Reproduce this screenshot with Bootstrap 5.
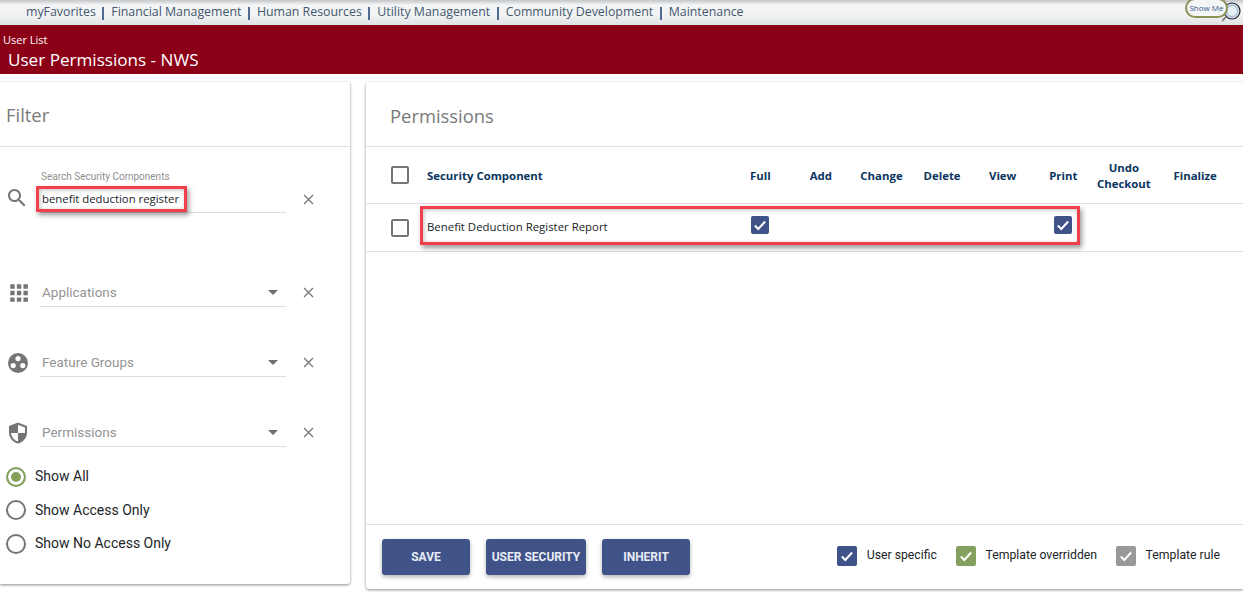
<!DOCTYPE html>
<html lang="en"><head><meta charset="utf-8"><title>User Permissions</title>
<link href="https://cdn.jsdelivr.net/npm/bootstrap@5.3.0/dist/css/bootstrap.min.css" rel="stylesheet">
<style>
html,body{height:594px;overflow:hidden;background:#fff}
body{font-family:Roboto,sans-serif;font-size:14px;color:#212529}
.topbar{height:25px;background:linear-gradient(#c4c6c8 0,#f4f5f6 5px,#f1f2f3 15px,#dfe2e4 25px);padding-left:26px;font:12.35px/1 "Open Sans",sans-serif;color:#44586e}
.topbar span{white-space:nowrap;padding-top:6px}
.topbar i{display:block;width:2px;height:13px;background:#4d6b94;margin:7px 7px 0 6.5px}
.showme{position:absolute;left:1185px;top:-2px;width:43px;height:20px;border:2px solid #8a9157;border-radius:10px;background:#f4f5f6;font:8px/16px "Open Sans",sans-serif;color:#345a8a;text-align:center;white-space:nowrap}
.showlens{position:absolute;left:1222px;top:1px;width:19px;height:21px}
.crumbbar{height:49px;background:#8b0016;color:#fff;font-family:"Open Sans",sans-serif}
.crumb{font-size:11px;line-height:14px;padding:8px 0 0 3px}
.pagetitle{font-size:17.1px;line-height:26px;padding-left:8px}
.maincols{height:520px;padding-top:8px}
.filterpane{width:350px;height:502px;box-shadow:0 1px 3px rgba(0,0,0,.45);border-radius:0 0 3px 0;margin-right:16px;position:relative}
.permpane{width:877px;height:507px;box-shadow:0 1px 3px rgba(0,0,0,.45);border-radius:3px 0 0 3px;position:relative}
.panehead{height:65px;border-bottom:1px solid #e0e0e0;font-size:18.4px;color:#7a7a7a;font-family:"Open Sans",sans-serif;line-height:67px}
.filterpane .panehead{padding-left:6px;line-height:65px}
.permpane .panehead{padding-left:24px}
.searchfield{height:65px;padding:24px 0 0 0;position:relative}
.fieldrow{width:350px}
.iconcell{width:36px;padding-left:6px;flex:none}
.under{width:246px;margin-left:4px;border-bottom:1px solid #ddd;color:#949494;font-size:13.5px;flex:none;position:relative}
.clearx{margin-left:16px;flex:none}
.searchx{margin-bottom:7px}
.floatlabel{font-size:10px;color:#8f8f8f;line-height:12px;padding-left:1px}
.typed{font:11.35px/17px "Open Sans",sans-serif;color:#212529;padding:7px 0 5px 2px}
.dropfield{height:29px;line-height:29px;padding-left:2px}
.caret{position:absolute;right:8px;top:12px;width:0;height:0;border-left:5px solid transparent;border-right:5px solid transparent;border-top:5px solid #6f6f6f}
.searchgap{height:66px}
.filterblock{margin-bottom:41px}
.lastfield{margin-bottom:13px}
.radioline{height:33.5px;padding-left:6px;font-size:14px;color:#212529}
.radiomark{width:20px;height:20px;border:2px solid #757575;border-radius:50%;margin-right:9px;flex:none}
.radiomark.ison{border-color:#84a05e;box-shadow:inset 0 0 0 3px #fff;background:#84a05e}
.permgrid{display:grid;grid-template-columns:61px 303px repeat(7,60.6px) 82px 7px;align-items:center;border-bottom:1px solid #e0e0e0}
.headrow{height:57px;padding-top:2px;font:700 11.4px/16px "Open Sans",sans-serif;color:#0b3560}
.bodyrow{height:48px;padding-bottom:2px;font:11.4px/16px "Open Sans",sans-serif}
.ctr{text-align:center}
.box{width:18px;height:18px;border:2px solid #757575;border-radius:2px;margin-left:25px}
.headrow .box{position:relative;top:-1px}
.bodyrow .box{position:relative;top:1px}
.tick{width:18px;height:18px;border-radius:2px;display:flex;align-items:center;justify-content:center;margin:auto}
.tick svg{width:16px;height:16px}
.tick.blue,.btnsave{background:#3f5389}
.tick.green{background:#84a05e}
.tick.grey{background:#999}
.tick.big{width:20px;height:20px;margin:0}
.tick.up{position:relative;top:-2px}
.permspacer{height:272px}
.permfoot{height:64px;border-top:1px solid #e0e0e0;padding:14px 23px 0 16px}
.btnsave{height:36px;border:0;border-radius:3px;color:#e9ecf5;font:700 12px/36px Roboto,sans-serif;box-shadow:0 2px 4px rgba(0,0,0,.3);padding:0;margin-right:16px}
.w88{width:88px}.w100{width:100px}
.legend{font-size:12.25px;color:#212529;line-height:14px;padding-top:7px}
.legend span{margin:0 19px 0 9.500px;position:relative;top:2px}
.legend span:last-child{margin-right:0}
.redmark{position:absolute;border:3px solid #f0404a;box-shadow:2px 3px 5px rgba(0,0,0,.4),inset 1px 1px 4px rgba(0,0,0,.25);pointer-events:none}
.mark1{left:36px;top:104px;width:151px;height:26px}
.mark2{left:54px;top:124px;width:660px;height:39px}
</style></head>
<body>
<div class="topbar d-flex position-relative">
<span>myFavorites</span><i></i><span>Financial Management</span><i></i><span>Human Resources</span><i></i><span>Utility Management</span><i></i><span>Community Development</span><i></i><span>Maintenance</span>
<svg class="showlens" viewBox="0 0 19 21"><circle cx="10" cy="10" r="8" fill="#cfdcec" stroke="#222" stroke-width="1.2"/><circle cx="10" cy="10" r="5.5" fill="#e5edf6" stroke="#9fb6d2"/><path d="M4 16L0 20" stroke="#888" stroke-width="2"/></svg>
<div class="showme">Show Me</div>
</div>
<div class="crumbbar"><div class="crumb">User List</div><div class="pagetitle">User Permissions - NWS</div></div>
<div class="maincols d-flex">
<section class="filterpane">
<div class="panehead">Filter</div>
<div class="searchfield"><div class="fieldrow d-flex align-items-end">
<div class="iconcell"><svg width="24" height="24" viewBox="0 0 24 24" style="margin-left:-1px;margin-bottom:3px;display:block" fill="#757575"><path d="M15.5 14h-.79l-.28-.27C15.41 12.59 16 11.110 16 9.500 16 5.910 13.090 3 9.500 3S3 5.910 3 9.500 5.910 16 9.500 16c1.610 0 3.090-.59 4.230-1.570l.27.28v.79l5 4.990L20.490 19l-4.990-5zm-6 0C7.010 14 5 11.990 5 9.500S7.010 5 9.500 5 14 7.010 14 9.500 11.990 14 9.500 14z"/></svg></div>
<div class="under"><div class="floatlabel">Search Security Components</div><div class="typed">benefit deduction register</div></div>
<svg class="clearx searchx" width="13" height="13" viewBox="0 0 13 13"><path d="M2 2l9 9M11 2l-9 9" stroke="#777" stroke-width="1.3"/></svg>
</div></div>
<div class="searchgap"></div>
<div class="filterblock fieldrow d-flex align-items-center">
<div class="iconcell"><svg width="20" height="20" viewBox="0 0 16 16" style="margin-left:3px" fill="#757575"><path d="M0 0h4v4H0zM6 0h4v4H6zM12 0h4v4h-4zM0 6h4v4H0zM6 6h4v4H6zM12 6h4v4h-4zM0 12h4v4H0zM6 12h4v4H6zM12 12h4v4h-4z" transform="translate(1 1) scale(.88)"/></svg></div>
<div class="under dropfield">Applications<b class="caret"></b></div>
<svg class="clearx" width="13" height="13" viewBox="0 0 13 13"><path d="M2 2l9 9M11 2l-9 9" stroke="#777" stroke-width="1.3"/></svg>
</div>
<div class="filterblock fieldrow d-flex align-items-center">
<div class="iconcell"><svg width="24" height="24" viewBox="0 0 24 24" fill="#757575"><path fill-rule="evenodd" d="M12 2a10 10 0 1 0 0 20 10 10 0 0 0 0-20zM12 5a2.6 2.6 0 1 1 0 5.200 2.600 2.600 0 0 1 0-5.200zM7.200 12a2.600 2.600 0 1 1 0 5.200 2.600 2.600 0 0 1 0-5.200zM16.800 12a2.600 2.600 0 1 1 0 5.200 2.600 2.600 0 0 1 0-5.200z"/></svg></div>
<div class="under dropfield">Feature Groups<b class="caret"></b></div>
<svg class="clearx" width="13" height="13" viewBox="0 0 13 13"><path d="M2 2l9 9M11 2l-9 9" stroke="#777" stroke-width="1.3"/></svg>
</div>
<div class="fieldrow d-flex align-items-center lastfield">
<div class="iconcell"><svg width="24" height="24" viewBox="0 0 24 24" fill="#757575"><path fill-rule="evenodd" d="M12 1.500L3 5v6.500c0 5.300 3.800 10 9 11 5.200-1 9-5.700 9-11V5zM12 12V3.700l7 2.700V12zM12 12v8.400c-3.800-1-6.700-4.500-7-8.400z"/></svg></div>
<div class="under dropfield">Permissions<b class="caret"></b></div>
<svg class="clearx" width="13" height="13" viewBox="0 0 13 13"><path d="M2 2l9 9M11 2l-9 9" stroke="#777" stroke-width="1.3"/></svg>
</div>
<div class="radioline d-flex align-items-center"><b class="radiomark ison"></b>Show All</div>
<div class="radioline d-flex align-items-center"><b class="radiomark"></b>Show Access Only</div>
<div class="radioline d-flex align-items-center"><b class="radiomark"></b>Show No Access Only</div>
<div class="redmark mark1"></div>
</section>
<section class="permpane">
<div class="panehead">Permissions</div>
<div class="permgrid headrow"><div><div class="box"></div></div><div>Security Component</div><div class="ctr">Full</div><div class="ctr">Add</div><div class="ctr">Change</div><div class="ctr">Delete</div><div class="ctr">View</div><div class="ctr">Print</div><div class="ctr">Undo Checkout</div><div class="ctr">Finalize</div><div></div></div>
<div class="permgrid bodyrow"><div><div class="box"></div></div><div>Benefit Deduction Register Report</div>
<div class="ctr"><div class="tick blue up"><svg viewBox="0 0 14 14"><path d="M2.500 7.500l3 3 6-6.500" fill="none" stroke="#fff" stroke-width="1.800"/></svg></div></div><div></div><div></div><div></div><div></div>
<div class="ctr"><div class="tick blue up"><svg viewBox="0 0 14 14"><path d="M2.500 7.500l3 3 6-6.500" fill="none" stroke="#fff" stroke-width="1.800"/></svg></div></div><div></div><div></div><div></div></div>
<div class="permspacer"></div>
<div class="permfoot d-flex justify-content-between">
<div class="d-flex align-items-start"><button class="btnsave w88">SAVE</button><button class="btnsave w100">USER SECURITY</button><button class="btnsave w88">INHERIT</button></div>
<div class="legend d-flex align-items-start">
<div class="tick blue big"><svg viewBox="0 0 14 14"><path d="M2.500 7.500l3 3 6-6.500" fill="none" stroke="#fff" stroke-width="1.800"/></svg></div><span>User specific</span>
<div class="tick green big"><svg viewBox="0 0 14 14"><path d="M2.500 7.500l3 3 6-6.500" fill="none" stroke="#fff" stroke-width="1.800"/></svg></div><span>Template overridden</span>
<div class="tick grey big"><svg viewBox="0 0 14 14"><path d="M2.500 7.500l3 3 6-6.500" fill="none" stroke="#fff" stroke-width="1.800"/></svg></div><span>Template rule</span>
</div></div>
<div class="redmark mark2"></div>
</section>
</div>
<script src="https://cdn.jsdelivr.net/npm/bootstrap@5.3.0/dist/js/bootstrap.bundle.min.js"></script>
</body></html>
